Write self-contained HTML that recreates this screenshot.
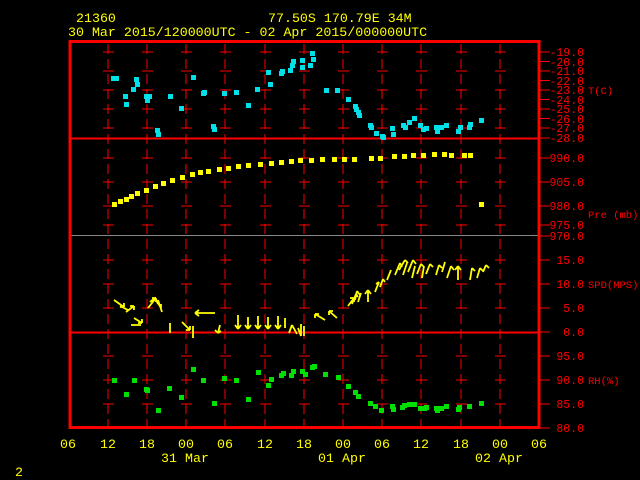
<!DOCTYPE html>
<html><head><meta charset="utf-8"><style>
html,body{margin:0;padding:0;background:#000;}
svg{display:block}
text{font-family:"Liberation Mono",monospace;}
</style></head><body>
<svg width="640" height="480" xmlns="http://www.w3.org/2000/svg" shape-rendering="crispEdges">
<rect width="640" height="480" fill="#000"/>
<g fill="#ffff00" font-size="13.3">
<text x="76" y="22">21360</text>
<text x="268" y="22">77.50S  170.79E    34M</text>
<text x="68" y="36">30 Mar 2015/120000UTC - 02 Apr 2015/000000UTC</text>
</g>
<g stroke="#ff0000" stroke-width="1" stroke-dasharray="10 5">
<line x1="108" y1="44" x2="108" y2="426"/><line x1="147" y1="44" x2="147" y2="426"/>
<line x1="186" y1="44" x2="186" y2="426"/><line x1="225" y1="44" x2="225" y2="426"/>
<line x1="265" y1="44" x2="265" y2="426"/><line x1="304" y1="44" x2="304" y2="426"/>
<line x1="343" y1="44" x2="343" y2="426"/><line x1="382" y1="44" x2="382" y2="426"/>
<line x1="421" y1="44" x2="421" y2="426"/><line x1="461" y1="44" x2="461" y2="426"/>
<line x1="500" y1="44" x2="500" y2="426"/>
</g>
<g id="cr" stroke="#ff0000">
<path d="M103 52h11M103 71h11M103 90h11M103 109h11M103 128h11M103 158h11M103 182h11M103 206h11M103 225h11M103 260h11M103 284h11M103 308h11M103 356h11M103 380h11M103 404h11"/>
</g>
<use href="#cr" x="39"/><use href="#cr" x="78"/><use href="#cr" x="117"/><use href="#cr" x="157"/>
<use href="#cr" x="196"/><use href="#cr" x="235"/><use href="#cr" x="274"/><use href="#cr" x="313"/>
<use href="#cr" x="353"/><use href="#cr" x="392"/>
<line x1="70" y1="138.5" x2="540" y2="138.5" stroke="#ff0000" stroke-width="2"/>
<line x1="70" y1="235.5" x2="540" y2="235.5" stroke="#888" stroke-width="1"/>
<line x1="70" y1="332.5" x2="540" y2="332.5" stroke="#ff0000" stroke-width="2"/>
<rect x="70" y="41.5" width="469" height="386" fill="none" stroke="#ff0000" stroke-width="3"/>
<path stroke="#ff0000" d="M540 52h10M540 61.5h10M540 71h10M540 80.5h10M540 90h10M540 99.5h10M540 109h10M540 118.5h10M540 128h10M540 138h10M540 158h10M540 182h10M540 206h10M540 225h10M540 236h10M540 260h10M540 284h10M540 308h10M540 332h10M540 356h10M540 380h10M540 404h10M540 428h10"/>
<g fill="#ff0000" font-size="11.5" text-anchor="end">
<text x="584" y="56">-19.0</text><text x="584" y="66">-20.0</text><text x="584" y="75">-21.0</text>
<text x="584" y="85">-22.0</text><text x="584" y="94">-23.0</text><text x="584" y="104">-24.0</text>
<text x="584" y="113">-25.0</text><text x="584" y="123">-26.0</text><text x="584" y="132">-27.0</text>
<text x="584" y="142">-28.0</text>
<text x="584" y="162">990.0</text><text x="584" y="186">905.0</text><text x="584" y="210">980.0</text>
<text x="584" y="229">975.0</text><text x="584" y="240">970.0</text>
<text x="584" y="264">15.0</text><text x="584" y="288">10.0</text><text x="584" y="312">5.0</text><text x="584" y="336">0.0</text>
<text x="584" y="360">95.0</text><text x="584" y="384">90.0</text><text x="584" y="408">85.0</text><text x="584" y="432">80.0</text>
</g>
<g fill="#ff0000" font-size="10.5">
<text x="588" y="94">T(C)</text><text x="588" y="218">Pre (mb)</text>
<text x="588" y="288">SPD(MPS)</text><text x="588" y="384">RH(%)</text>
</g>
<g fill="#00e0e8">
<rect x="111" y="76" width="5" height="5"/><rect x="114" y="76" width="5" height="5"/><rect x="123" y="94" width="5" height="5"/><rect x="124" y="102" width="5" height="5"/><rect x="131" y="87" width="5" height="5"/><rect x="134" y="77" width="5" height="5"/><rect x="135" y="82" width="5" height="5"/><rect x="144" y="94" width="5" height="5"/><rect x="145" y="98" width="5" height="5"/><rect x="147" y="94" width="5" height="5"/><rect x="155" y="128" width="5" height="5"/><rect x="156" y="132" width="5" height="5"/><rect x="168" y="94" width="5" height="5"/><rect x="179" y="106" width="5" height="5"/><rect x="191" y="75" width="5" height="5"/><rect x="201" y="91" width="5" height="5"/><rect x="202" y="90" width="5" height="5"/><rect x="211" y="124" width="5" height="5"/><rect x="212" y="127" width="5" height="5"/><rect x="222" y="91" width="5" height="5"/><rect x="234" y="90" width="5" height="5"/><rect x="246" y="103" width="5" height="5"/><rect x="255" y="87" width="5" height="5"/><rect x="266" y="70" width="5" height="5"/><rect x="268" y="82" width="5" height="5"/><rect x="279" y="71" width="5" height="5"/><rect x="280" y="69" width="5" height="5"/><rect x="288" y="68" width="5" height="5"/><rect x="290" y="63" width="5" height="5"/><rect x="291" y="59" width="5" height="5"/><rect x="300" y="58" width="5" height="5"/><rect x="300" y="65" width="5" height="5"/><rect x="308" y="63" width="5" height="5"/><rect x="310" y="51" width="5" height="5"/><rect x="311" y="57" width="5" height="5"/><rect x="324" y="88" width="5" height="5"/><rect x="335" y="88" width="5" height="5"/><rect x="346" y="97" width="5" height="5"/><rect x="353" y="104" width="5" height="5"/><rect x="354" y="107" width="5" height="5"/><rect x="356" y="110" width="5" height="5"/><rect x="357" y="113" width="5" height="5"/><rect x="368" y="123" width="5" height="5"/><rect x="369" y="125" width="5" height="5"/><rect x="374" y="131" width="5" height="5"/><rect x="380" y="134" width="5" height="5"/><rect x="381" y="135" width="5" height="5"/><rect x="390" y="126" width="5" height="5"/><rect x="391" y="132" width="5" height="5"/><rect x="401" y="123" width="5" height="5"/><rect x="403" y="125" width="5" height="5"/><rect x="407" y="120" width="5" height="5"/><rect x="412" y="116" width="5" height="5"/><rect x="418" y="123" width="5" height="5"/><rect x="421" y="127" width="5" height="5"/><rect x="424" y="126" width="5" height="5"/><rect x="434" y="125" width="5" height="5"/><rect x="435" y="129" width="5" height="5"/><rect x="439" y="125" width="5" height="5"/><rect x="444" y="123" width="5" height="5"/><rect x="456" y="129" width="5" height="5"/><rect x="458" y="125" width="5" height="5"/><rect x="467" y="125" width="5" height="5"/><rect x="468" y="122" width="5" height="5"/><rect x="479" y="118" width="5" height="5"/>
</g>
<g fill="#ffff00">
<rect x="112" y="202" width="5" height="5"/><rect x="118" y="199" width="5" height="5"/><rect x="124" y="197" width="5" height="5"/><rect x="129" y="194" width="5" height="5"/><rect x="135" y="191" width="5" height="5"/><rect x="144" y="188" width="5" height="5"/><rect x="153" y="184" width="5" height="5"/><rect x="161" y="181" width="5" height="5"/><rect x="170" y="178" width="5" height="5"/><rect x="180" y="175" width="5" height="5"/><rect x="190" y="172" width="5" height="5"/><rect x="198" y="170" width="5" height="5"/><rect x="206" y="169" width="5" height="5"/><rect x="217" y="167" width="5" height="5"/><rect x="226" y="166" width="5" height="5"/><rect x="236" y="164" width="5" height="5"/><rect x="246" y="163" width="5" height="5"/><rect x="258" y="162" width="5" height="5"/><rect x="269" y="161" width="5" height="5"/><rect x="279" y="160" width="5" height="5"/><rect x="289" y="159" width="5" height="5"/><rect x="298" y="158" width="5" height="5"/><rect x="309" y="158" width="5" height="5"/><rect x="320" y="157" width="5" height="5"/><rect x="332" y="157" width="5" height="5"/><rect x="342" y="157" width="5" height="5"/><rect x="352" y="157" width="5" height="5"/><rect x="369" y="156" width="5" height="5"/><rect x="378" y="156" width="5" height="5"/><rect x="392" y="154" width="5" height="5"/><rect x="402" y="154" width="5" height="5"/><rect x="411" y="153" width="5" height="5"/><rect x="421" y="153" width="5" height="5"/><rect x="432" y="152" width="5" height="5"/><rect x="442" y="152" width="5" height="5"/><rect x="449" y="153" width="5" height="5"/><rect x="462" y="153" width="5" height="5"/><rect x="468" y="153" width="5" height="5"/><rect x="479" y="202" width="5" height="5"/>
</g>
<g fill="#00e000">
<rect x="112" y="378" width="5" height="5"/><rect x="124" y="392" width="5" height="5"/><rect x="132" y="378" width="5" height="5"/><rect x="144" y="387" width="5" height="5"/><rect x="145" y="388" width="5" height="5"/><rect x="156" y="408" width="5" height="5"/><rect x="167" y="386" width="5" height="5"/><rect x="179" y="395" width="5" height="5"/><rect x="191" y="367" width="5" height="5"/><rect x="201" y="378" width="5" height="5"/><rect x="212" y="401" width="5" height="5"/><rect x="222" y="376" width="5" height="5"/><rect x="234" y="378" width="5" height="5"/><rect x="246" y="397" width="5" height="5"/><rect x="256" y="370" width="5" height="5"/><rect x="266" y="383" width="5" height="5"/><rect x="269" y="377" width="5" height="5"/><rect x="279" y="373" width="5" height="5"/><rect x="281" y="371" width="5" height="5"/><rect x="289" y="373" width="5" height="5"/><rect x="291" y="369" width="5" height="5"/><rect x="300" y="369" width="5" height="5"/><rect x="303" y="372" width="5" height="5"/><rect x="310" y="365" width="5" height="5"/><rect x="312" y="364" width="5" height="5"/><rect x="323" y="372" width="5" height="5"/><rect x="336" y="375" width="5" height="5"/><rect x="346" y="384" width="5" height="5"/><rect x="353" y="390" width="5" height="5"/><rect x="356" y="394" width="5" height="5"/><rect x="368" y="401" width="5" height="5"/><rect x="373" y="404" width="5" height="5"/><rect x="379" y="408" width="5" height="5"/><rect x="390" y="404" width="5" height="5"/><rect x="391" y="407" width="5" height="5"/><rect x="400" y="405" width="5" height="5"/><rect x="402" y="403" width="5" height="5"/><rect x="407" y="402" width="5" height="5"/><rect x="412" y="402" width="5" height="5"/><rect x="418" y="406" width="5" height="5"/><rect x="422" y="406" width="5" height="5"/><rect x="424" y="405" width="5" height="5"/><rect x="434" y="406" width="5" height="5"/><rect x="435" y="408" width="5" height="5"/><rect x="439" y="406" width="5" height="5"/><rect x="444" y="404" width="5" height="5"/><rect x="456" y="407" width="5" height="5"/><rect x="457" y="405" width="5" height="5"/><rect x="467" y="404" width="5" height="5"/><rect x="479" y="401" width="5" height="5"/>
</g>
<g stroke="#ffff00" stroke-width="1.8" fill="none" shape-rendering="auto">
<path d="M114 300l10 7m0 0v-4m0 4h-4M120 306l8 4M126 312l8-6m0 0h-4m4 0v4M134 318l8 5m0 0v-4m0 4h-4M131 325h10M150 302l5-4 3 6M148 308l8-10m0 0v4m0-4h-4M155 298l6 10m0 0v-4M158 300l4 12"/>
<path d="M170 323v10M182 322l8 8m0 0v-4m0 4h-4M193 326v12M215 313h-20m0 0l4-3m-4 3l4 3M205 313h-10M220 325l-2 8m0 0l-3-3m3 3l3-2M238 315v14m0 0l-3-4m3 4l3-4M248 317v12m0 0l-3-4m3 4l3-4M258 316v13m0 0l-3-4m3 4l3-4M268 317v12m0 0l-3-4m3 4l3-4M278 316v13m0 0l-3-4m3 4l3-4M285 318v10M292 325l-3 8m3-8l5 9M298 328l3 8M301 324v12M304 326v10"/>
<path d="M325 320l-10-6m0 0h4m-4 0v4M337 318l-8-7m0 0h4m-4 0v4"/>
<path d="M348 306l6-8m0 0v4m0-4h-4M352 304l4-10m0 0l2 3M355 300l2-9m0 0l3 4M358 302l3-9M368 302v-12m0 0l-3 4m3-4l3 4M375 292l4-10m0 0l-3 2M380 287l3-8m0 0l2 3M387 280l4-10M395 275l5-12m0 0l2 4M399 270l6-10m0 0l3 3M403 275l4-12M408 272l5-12m0 0l3 4M412 278l3-12M417 274l4-10m0 0l3 3M422 278l2-12M426 274l4-10m0 0l3 3M436 275l3-10m0 0l3 3M442 272l3-10M447 278l4-12m0 0l3 4M458 280v-14m0 0l-3 4m3-4l3 4M470 280l2-12m0 0l3 3M477 278l3-10m0 0l3 3M483 272l3-7m0 0l3 3"/>
</g>
<g fill="#ffff00" font-size="13.3" text-anchor="middle">
<text x="68" y="448">06</text><text x="108" y="448">12</text><text x="147" y="448">18</text>
<text x="186" y="448">00</text><text x="225" y="448">06</text><text x="265" y="448">12</text>
<text x="304" y="448">18</text><text x="343" y="448">00</text><text x="382" y="448">06</text>
<text x="421" y="448">12</text><text x="461" y="448">18</text><text x="500" y="448">00</text>
<text x="539" y="448">06</text>
<text x="185" y="462">31 Mar</text><text x="342" y="462">01 Apr</text><text x="499" y="462">02 Apr</text>
</g>
<text x="15" y="476" fill="#ffff00" font-size="13.3">2</text>
</svg>
</body></html>
